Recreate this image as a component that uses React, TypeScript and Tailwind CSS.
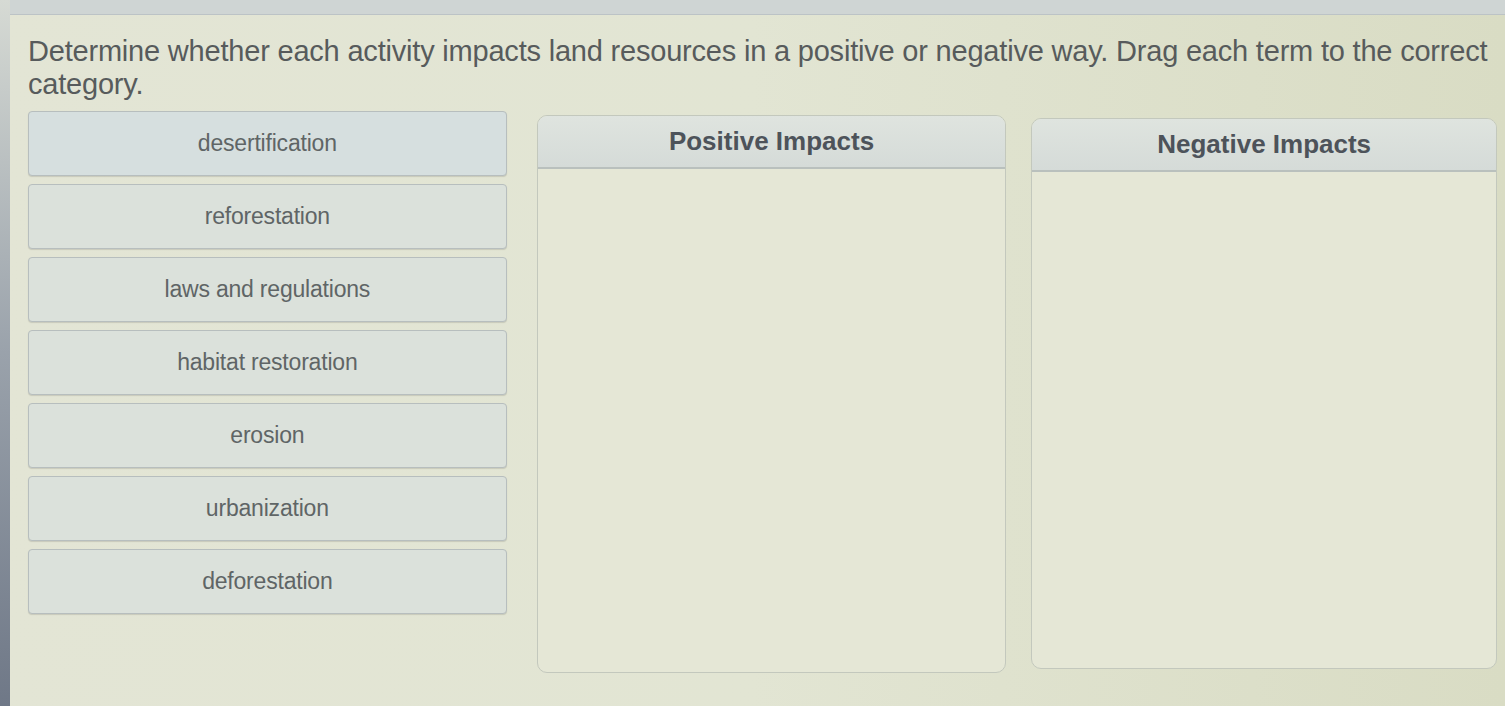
import React from "react";

const terms = [
  "desertification",
  "reforestation",
  "laws and regulations",
  "habitat restoration",
  "erosion",
  "urbanization",
  "deforestation",
];

function Category({ title, className = "" }: { title: string; className?: string }) {
  return (
    <div
      className={`flex flex-col rounded-[10px] border border-[#c3c8bd] bg-[#e5e7d6] overflow-hidden ${className}`}
    >
      <div className="h-[53px] flex items-center justify-center border-b-2 border-[#b9c0bd] bg-gradient-to-b from-[#dfe4df] to-[#d5dbd8]">
        <span className="text-[26px] font-bold text-[#4d535a]">{title}</span>
      </div>
      <div className="flex-1" />
    </div>
  );
}

export default function App() {
  return (
    <div
      className="relative w-[1505px] h-[706px] overflow-hidden bg-gradient-to-r from-[#e3e5d5] via-[#e2e5d3] to-[#d9dcc4]"
      style={{ fontFamily: '"Liberation Sans", Arial, sans-serif' }}
    >
      <div className="absolute left-0 top-0 right-0 h-[15px] bg-[#cfd5d4] border-b border-[#bcc3c6]" />
      <div className="absolute left-0 top-0 bottom-0 w-[10px] bg-gradient-to-b from-[#d6dad4] via-[#9aa2ab] to-[#6f7887]" />

      <div className="pl-[28px] pr-[8px] pt-[35px]">
        <p className="text-[29px] leading-[33px] text-[#575b5c] tracking-[-0.2px]">
          Determine whether each activity impacts land resources in a positive or negative way. Drag each term to the correct
          category.
        </p>

        <div className="mt-[10px] flex">
          <div className="w-[479px] flex flex-col gap-[8px]">
            {terms.map((t, i) => (
              <div
                key={t}
                className={`h-[65px] flex items-center justify-center rounded-[4px] border border-[#b7bebe] shadow-[0_1px_1px_rgba(0,0,0,0.12)] ${
                  i === 0 ? "bg-[#d6dfdf]" : "bg-[#dbe1db]"
                }`}
              >
                <span className="text-[23px] text-[#5f6566] tracking-[-0.2px]">{t}</span>
              </div>
            ))}
          </div>

          <Category title="Positive Impacts" className="ml-[30px] w-[470px] h-[558px] mt-[4px]" />
          <Category title="Negative Impacts" className="ml-[25px] w-[466px] h-[551px] mt-[7px]" />
        </div>
      </div>
    </div>
  );
}
